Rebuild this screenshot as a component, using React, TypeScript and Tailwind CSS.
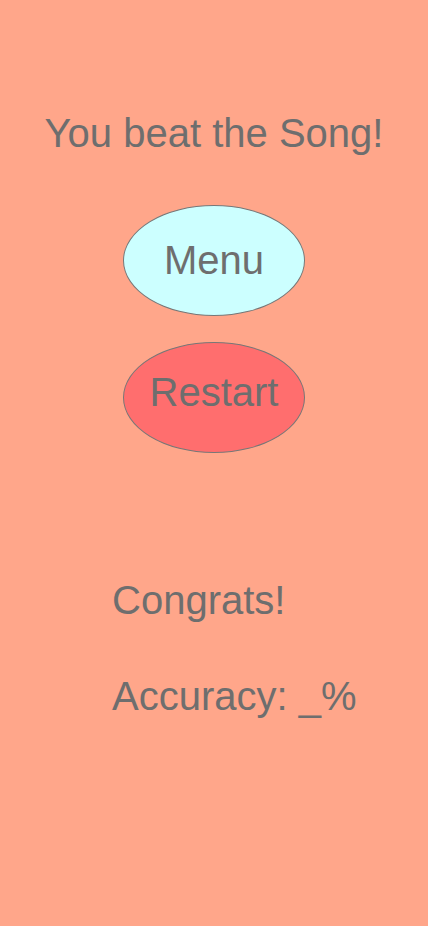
export default function App() {
  return (
    <div
      className="w-full min-h-[926px] bg-[#ffa68a] flex flex-col text-[#6e6e6e] text-[40px] leading-[45px]"
      style={{ fontFamily: '"Liberation Sans", Arial, sans-serif' }}
    >
      <div className="mt-[111px] text-center">You beat the Song!</div>
      <div className="mt-[49px] flex justify-center">
        <button className="w-[182px] h-[111px] rounded-[50%] bg-[#ccffff] border border-[#777777] flex items-center justify-center text-[#6e6e6e]">
          Menu
        </button>
      </div>
      <div className="mt-[26px] flex justify-center">
        <button className="w-[182px] h-[111px] rounded-[50%] bg-[#ff6e6e] border border-[#777777] flex items-center justify-center pb-[10px] text-[#6e6e6e]">
          Restart
        </button>
      </div>
      <div className="mt-[125px] pl-[112px]">Congrats!</div>
      <div className="mt-[51px] pl-[112px]">Accuracy: _%</div>
    </div>
  );
}
